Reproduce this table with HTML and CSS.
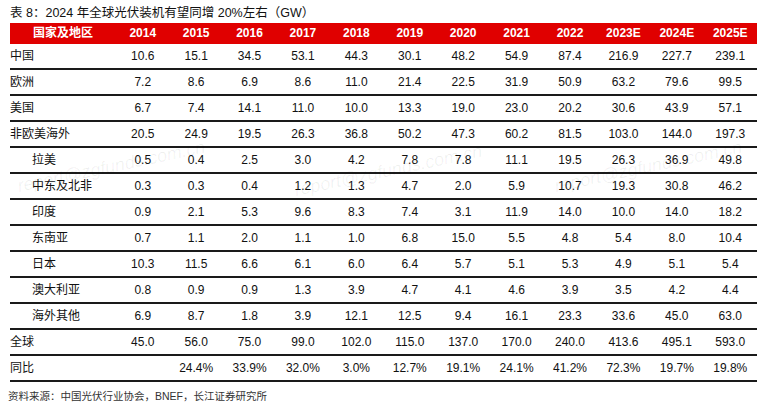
FILE: index.html
```html
<!DOCTYPE html>
<html lang="zh-CN">
<head>
<meta charset="utf-8">
<title>表 8</title>
<link rel="stylesheet" href="styles.css">
</head>
<body>
<div class="page">
  <div class="title">表 8：2024 年全球光伏装机有望同增 20%左右（GW）</div>
  <table class="data">
    <colgroup>
      <col class="c-label">
      <col span="12" class="c-num">
    </colgroup>
    <thead>
      <tr>
        <th>国家及地区</th><th>2014</th><th>2015</th><th>2016</th><th>2017</th><th>2018</th><th>2019</th><th>2020</th><th>2021</th><th>2022</th><th>2023E</th><th>2024E</th><th>2025E</th>
      </tr>
    </thead>
    <tbody>
      <tr><td>中国</td><td>10.6</td><td>15.1</td><td>34.5</td><td>53.1</td><td>44.3</td><td>30.1</td><td>48.2</td><td>54.9</td><td>87.4</td><td>216.9</td><td>227.7</td><td>239.1</td></tr>
      <tr><td>欧洲</td><td>7.2</td><td>8.6</td><td>6.9</td><td>8.6</td><td>11.0</td><td>21.4</td><td>22.5</td><td>31.9</td><td>50.9</td><td>63.2</td><td>79.6</td><td>99.5</td></tr>
      <tr><td>美国</td><td>6.7</td><td>7.4</td><td>14.1</td><td>11.0</td><td>10.0</td><td>13.3</td><td>19.0</td><td>23.0</td><td>20.2</td><td>30.6</td><td>43.9</td><td>57.1</td></tr>
      <tr><td>非欧美海外</td><td>20.5</td><td>24.9</td><td>19.5</td><td>26.3</td><td>36.8</td><td>50.2</td><td>47.3</td><td>60.2</td><td>81.5</td><td>103.0</td><td>144.0</td><td>197.3</td></tr>
      <tr><td class="sub">拉美</td><td>0.5</td><td>0.4</td><td>2.5</td><td>3.0</td><td>4.2</td><td>7.8</td><td>7.8</td><td>11.1</td><td>19.5</td><td>26.3</td><td>36.9</td><td>49.8</td></tr>
      <tr><td class="sub">中东及北非</td><td>0.3</td><td>0.3</td><td>0.4</td><td>1.2</td><td>1.3</td><td>4.7</td><td>2.0</td><td>5.9</td><td>10.7</td><td>19.3</td><td>30.8</td><td>46.2</td></tr>
      <tr><td class="sub">印度</td><td>0.9</td><td>2.1</td><td>5.3</td><td>9.6</td><td>8.3</td><td>7.4</td><td>3.1</td><td>11.9</td><td>14.0</td><td>10.0</td><td>14.0</td><td>18.2</td></tr>
      <tr><td class="sub">东南亚</td><td>0.7</td><td>1.1</td><td>2.0</td><td>1.1</td><td>1.0</td><td>6.8</td><td>15.0</td><td>5.5</td><td>4.8</td><td>5.4</td><td>8.0</td><td>10.4</td></tr>
      <tr><td class="sub">日本</td><td>10.3</td><td>11.5</td><td>6.6</td><td>6.1</td><td>6.0</td><td>6.4</td><td>5.7</td><td>5.1</td><td>5.3</td><td>4.9</td><td>5.1</td><td>5.4</td></tr>
      <tr><td class="sub">澳大利亚</td><td>0.8</td><td>0.9</td><td>0.9</td><td>1.3</td><td>3.9</td><td>4.7</td><td>4.1</td><td>4.6</td><td>3.9</td><td>3.5</td><td>4.2</td><td>4.4</td></tr>
      <tr><td class="sub">海外其他</td><td>6.9</td><td>8.7</td><td>1.8</td><td>3.9</td><td>12.1</td><td>12.5</td><td>9.4</td><td>16.1</td><td>23.3</td><td>33.6</td><td>45.0</td><td>63.0</td></tr>
      <tr><td>全球</td><td>45.0</td><td>56.0</td><td>75.0</td><td>99.0</td><td>102.0</td><td>115.0</td><td>137.0</td><td>170.0</td><td>240.0</td><td>413.6</td><td>495.1</td><td>593.0</td></tr>
      <tr><td>同比</td><td></td><td>24.4%</td><td>33.9%</td><td>32.0%</td><td>3.0%</td><td>12.7%</td><td>19.1%</td><td>24.1%</td><td>41.2%</td><td>72.3%</td><td>19.7%</td><td>19.8%</td></tr>
    </tbody>
  </table>
  <div class="source">资料来源：中国光伏行业协会，BNEF，长江证券研究所</div>

  <div class="wm wm1">report@zgfunds.com.cn</div>
  <div class="wm wm2">report@zgfunds.com.cn</div>
  <div class="wm wm3">report@zgfunds.com.cn</div>
</div>
</body>
</html>
```

FILE: styles.css
```css
html, body {
  margin: 0;
  padding: 0;
  background: #ffffff;
}

.page {
  position: relative;
  width: 768px;
  height: 405px;
  overflow: hidden;
  padding: 6px 0 0 10px;
  box-sizing: border-box;
  font-family: "Liberation Sans", "Noto Sans CJK SC", sans-serif;
  color: #111;
}

.title {
  font-size: 12.5px;
  line-height: 15px;
  height: 15px;
  color: #111;
  margin-bottom: 2px;
  white-space: nowrap;
}

.data {
  width: 747px;
  table-layout: fixed;
  border-collapse: separate;
  border-spacing: 0;
  font-size: 12px;
}

.c-label { width: 106px; }
.c-num { width: 53.4px; }

.data th {
  background: #e00000;
  color: #ffffff;
  font-weight: bold;
  height: 21px;
  padding: 0;
  text-align: center;
  line-height: 21px;
}

.data td {
  height: 24px;
  padding: 0;
  text-align: center;
  line-height: 24px;
  border-bottom: 2px solid #1a1a1a;
  white-space: nowrap;
}

.data td:first-child {
  text-align: left;
}

.data td.sub {
  padding-left: 22px;
}

.source {
  margin-top: 7px;
  font-size: 10.5px;
  line-height: 14px;
  color: #333;
  white-space: nowrap;
  margin-left: -2px;
}

.wm {
  position: absolute;
  font-family: "Liberation Sans", sans-serif;
  font-style: italic;
  font-size: 18px;
  color: rgba(0, 0, 0, 0.06);
  white-space: nowrap;
  transform: rotate(-12deg);
  transform-origin: left bottom;
  pointer-events: none;
}

.wm1 { left: 20px; top: 176px; }
.wm2 { left: 297px; top: 180px; }
.wm3 { left: 557px; top: 176px; }
```
